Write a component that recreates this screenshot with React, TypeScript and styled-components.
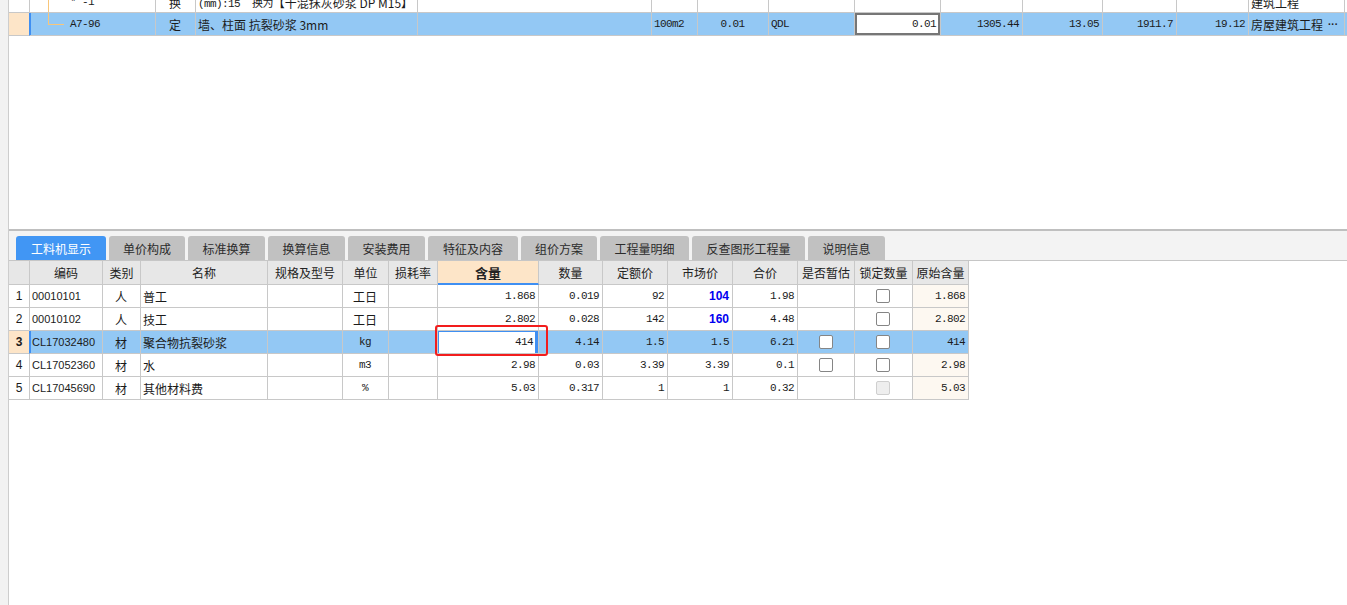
import React from "react";
import styled, { createGlobalStyle, css } from "styled-components";

const GlobalStyle = createGlobalStyle`
  html, body { margin: 0; padding: 0; background: #fff; }
  body {
    font-family: "Noto Sans CJK SC", "Liberation Sans", sans-serif;
    font-size: 12px;
    color: #1b1b1b;
  }
  * { box-sizing: border-box; }
`;

const LINE = "#c8c8c8";
const SEL = "#93c8f4";
const PEACH = "#fde5c8";
const BLUE = "#3f8ff2";

const Page = styled.div`
  display: flex;
  width: 1347px;
  height: 605px;
  overflow: hidden;
  background: #fff;
`;

const LeftStrip = styled.div`
  width: 9px;
  flex: none;
  background: #f2f2f2;
  border-right: 1px solid #cdcdcd;
`;

const Main = styled.div`
  flex: 1;
  min-width: 0;
  display: flex;
  flex-direction: column;
`;

const TopPanel = styled.div`
  height: 229px;
  flex: none;
  overflow: hidden;
  background: #fff;
`;

const TopScroll = styled.div`
  margin-top: -10px;
`;

const Splitter = styled.div`
  height: 2px;
  flex: none;
  background: #bfbfbf;
`;

const TabBar = styled.div`
  height: 30px;
  flex: none;
  display: flex;
  align-items: flex-end;
  gap: 3px;
  padding-left: 7px;
  background: #f3f3f3;
  border-bottom: 1px solid #c6c6c6;
`;

const Tab = styled.div<{ $active?: boolean; $w: number }>`
  width: ${(p) => p.$w}px;
  height: 24px;
  display: flex;
  align-items: center;
  justify-content: center;
  border-radius: 3px 3px 0 0;
  font-size: 12px;
  background: ${(p) => (p.$active ? "#4196f4" : "#c1c1c1")};
  color: ${(p) => (p.$active ? "#fff" : "#2b2b2b")};
`;

const Grid = styled.div<{ $w: string }>`
  width: ${(p) => p.$w};
  display: flex;
  flex-direction: column;
`;

const Row = styled.div<{ $cols: string; $h: number }>`
  display: grid;
  grid-template-columns: ${(p) => p.$cols};
  height: ${(p) => p.$h}px;
`;

type Font = "cjk" | "mono" | "sans";

const fontCss = (f: Font) => {
  if (f === "mono")
    return css`
      font-family: "Liberation Mono", "Noto Sans CJK SC", monospace;
      font-size: 11px;
      letter-spacing: -0.6px;
    `;
  if (f === "sans")
    return css`
      font-family: "Liberation Sans", "Noto Sans CJK SC", sans-serif;
      font-size: 11px;
    `;
  return css`
    font-family: "Noto Sans CJK SC", "Liberation Sans", sans-serif;
    font-size: 12px;
  `;
};

const Cell = styled.div<{
  $align?: "left" | "center" | "right";
  $bg?: string;
  $font?: Font;
  $padL?: number;
  $padR?: number;
  $padT?: number;
  $noRight?: boolean;
  $visible?: boolean;
}>`
  position: relative;
  display: flex;
  align-items: center;
  justify-content: ${(p) =>
    p.$align === "right" ? "flex-end" : p.$align === "center" ? "center" : "flex-start"};
  padding: ${(p) => p.$padT ?? 0}px ${(p) => p.$padR ?? 3}px 0 ${(p) => p.$padL ?? 2}px;
  border-right: ${(p) => (p.$noRight ? "none" : `1px solid ${LINE}`)};
  border-bottom: 1px solid ${LINE};
  background: ${(p) => p.$bg ?? "#fff"};
  white-space: nowrap;
  overflow: ${(p) => (p.$visible ? "visible" : "hidden")};
  ${(p) => fontCss(p.$font ?? "cjk")}
`;

const RowHead = styled(Cell)<{ $sel?: boolean }>`
  justify-content: center;
  padding: 0;
  font-family: "Liberation Sans", sans-serif;
  font-size: 12px;
  font-weight: ${(p) => (p.$sel ? 700 : 400)};
  background: ${(p) => (p.$sel ? PEACH : p.$bg ?? "#fff")};
  border-right-color: ${(p) => (p.$sel ? BLUE : LINE)};
`;

const HeadCell = styled(Cell)<{ $hl?: boolean }>`
  justify-content: center;
  padding: 0;
  background: ${(p) => (p.$hl ? PEACH : "#e7e7e7")};
  font-size: ${(p) => (p.$hl ? 13 : 12)}px;
  font-weight: ${(p) => (p.$hl ? 700 : 400)};
  color: #222;
  ${(p) =>
    p.$hl &&
    css`
      border-bottom: 2px solid ${BLUE};
    `}
`;

const SelEdge = styled.span`
  position: absolute;
  left: 0;
  top: 0;
  bottom: -1px;
  width: 1px;
  background: ${BLUE};
`;

const TreeV = styled.span<{ $full?: boolean }>`
  position: absolute;
  left: 18px;
  top: 0;
  width: 1px;
  height: ${(p) => (p.$full ? "100%" : "11px")};
  background: #f8c67a;
`;

const TreeH = styled.span`
  position: absolute;
  left: 18px;
  top: 11px;
  width: 16px;
  height: 1px;
  background: #f8c67a;
`;

const InputBox = styled(Cell)`
  background: #fff;
  box-shadow: inset 0 0 0 2px #767676;
  padding-right: 4px;
`;

const EditCell = styled(Cell)`
  background: #fff;
  box-shadow: inset 1px 1px 0 ${BLUE}, inset -3px 0 0 ${BLUE};
  padding-right: 5px;
`;

const RedMark = styled.span`
  position: absolute;
  left: -3px;
  top: -6px;
  width: 113px;
  height: 31px;
  border: 2px solid #f21d1d;
  border-radius: 3px;
  z-index: 3;
  pointer-events: none;
`;

const Price = styled.span`
  color: #0000f0;
  font-weight: 700;
  font-family: "Liberation Sans", sans-serif;
  font-size: 12px;
  letter-spacing: 0;
`;

const Check = styled.span<{ $disabled?: boolean }>`
  width: 14px;
  height: 14px;
  border-radius: 2px;
  border: 1px solid ${(p) => (p.$disabled ? "#cfcfcf" : "#858585")};
  background: ${(p) => (p.$disabled ? "#eeeeee" : "#fff")};
`;

const Dots = styled.span`
  margin-left: auto;
  font-family: "Liberation Sans", sans-serif;
  font-weight: 700;
  letter-spacing: 0;
  font-size: 10px;
`;

const CjkInline = styled.span`
  font-family: "Noto Sans CJK SC", sans-serif;
  font-size: 12px;
  letter-spacing: 0;
`;

const WhiteFill = styled.div`
  flex: 1;
  background: #fff;
`;

/* ---------------- data ---------------- */

const TOP_COLS =
  "21px 126px 40px 222px 234px 46px 71px 86px 86px 82px 80px 74px 72px 96px 1fr";

const LOW_COLS =
  "21px 73px 38px 127px 75px 46px 49px 101px 64px 65px 65px 65px 57px 58px 56px";

const tabs: { label: string; w: number }[] = [
  { label: "工料机显示", w: 90 },
  { label: "单价构成", w: 76 },
  { label: "标准换算", w: 77 },
  { label: "换算信息", w: 77 },
  { label: "安装费用", w: 77 },
  { label: "特征及内容", w: 90 },
  { label: "组价方案", w: 76 },
  { label: "工程量明细", w: 89 },
  { label: "反查图形工程量", w: 113 },
  { label: "说明信息", w: 77 },
];

const headers = [
  "",
  "编码",
  "类别",
  "名称",
  "规格及型号",
  "单位",
  "损耗率",
  "含量",
  "数量",
  "定额价",
  "市场价",
  "合价",
  "是否暂估",
  "锁定数量",
  "原始含量",
];

type Item = {
  code: string;
  cat: string;
  name: string;
  unit: string;
  unitMono?: boolean;
  qty: string;
  amount: string;
  quota: string;
  market: string;
  marketBold?: boolean;
  total: string;
  est: boolean;
  lock: "on" | "disabled";
  orig: string;
  sel?: boolean;
};

const items: Item[] = [
  { code: "00010101", cat: "人", name: "普工", unit: "工日", qty: "1.868", amount: "0.019", quota: "92", market: "104", marketBold: true, total: "1.98", est: false, lock: "on", orig: "1.868" },
  { code: "00010102", cat: "人", name: "技工", unit: "工日", qty: "2.802", amount: "0.028", quota: "142", market: "160", marketBold: true, total: "4.48", est: false, lock: "on", orig: "2.802" },
  { code: "CL17032480", cat: "材", name: "聚合物抗裂砂浆", unit: "kg", unitMono: true, qty: "414", amount: "4.14", quota: "1.5", market: "1.5", total: "6.21", est: true, lock: "on", orig: "414", sel: true },
  { code: "CL17052360", cat: "材", name: "水", unit: "m3", unitMono: true, qty: "2.98", amount: "0.03", quota: "3.39", market: "3.39", total: "0.1", est: true, lock: "on", orig: "2.98" },
  { code: "CL17045690", cat: "材", name: "其他材料费", unit: "%", unitMono: true, qty: "5.03", amount: "0.317", quota: "1", market: "1", total: "0.32", est: false, lock: "disabled", orig: "5.03" },
];

/* ---------------- parts ---------------- */

function TopGrid() {
  return (
    <TopScroll>
      <Grid $w="1338px">
        <Row $cols={TOP_COLS} $h={23}>
          <RowHead />
          <Cell $font="mono" $padL={40} $padT={2}>
            <TreeV $full />
            * -1
          </Cell>
          <Cell $align="center" $padT={2}>换</Cell>
          <Cell $font="mono" $padT={2}>
            (mm):15&nbsp;&nbsp;换为<CjkInline>【干混抹灰砂浆 DP M15】</CjkInline>
          </Cell>
          <Cell />
          <Cell />
          <Cell />
          <Cell />
          <Cell />
          <Cell />
          <Cell />
          <Cell />
          <Cell />
          <Cell $padT={2}>建筑工程</Cell>
          <Cell $noRight />
        </Row>
        <Row $cols={TOP_COLS} $h={23}>
          <RowHead $sel />
          <Cell $bg={SEL} $font="mono" $padL={40}>
            <SelEdge />
            <TreeV />
            <TreeH />
            A7-96
          </Cell>
          <Cell $bg={SEL} $align="center">定</Cell>
          <Cell $bg={SEL}>墙、柱面 抗裂砂浆 3mm</Cell>
          <Cell $bg={SEL} />
          <Cell $bg={SEL} $font="mono">100m2</Cell>
          <Cell $bg={SEL} $font="mono" $align="center">0.01</Cell>
          <Cell $bg={SEL} $font="mono">QDL</Cell>
          <InputBox $font="mono" $align="right">0.01</InputBox>
          <Cell $bg={SEL} $font="mono" $align="right">1305.44</Cell>
          <Cell $bg={SEL} $font="mono" $align="right">13.05</Cell>
          <Cell $bg={SEL} $font="mono" $align="right">1911.7</Cell>
          <Cell $bg={SEL} $font="mono" $align="right">19.12</Cell>
          <Cell $bg={SEL} $padR={6}>
            房屋建筑工程
            <Dots>···</Dots>
          </Cell>
          <Cell $bg={SEL} $noRight />
        </Row>
      </Grid>
    </TopScroll>
  );
}

function LowerGrid() {
  return (
    <Grid $w="960px">
      <Row $cols={LOW_COLS} $h={24}>
        {headers.map((h, i) => (
          <HeadCell key={i} $hl={h === "含量"}>
            {h}
          </HeadCell>
        ))}
      </Row>
      {items.map((it, i) => {
        const bg = it.sel ? SEL : "#fff";
        return (
          <Row key={it.code} $cols={LOW_COLS} $h={23}>
            <RowHead $sel={it.sel}>{i + 1}</RowHead>
            <Cell $bg={bg} $font="sans">
              {it.sel && <SelEdge />}
              {it.code}
            </Cell>
            <Cell $bg={bg} $align="center">{it.cat}</Cell>
            <Cell $bg={bg}>{it.name}</Cell>
            <Cell $bg={bg} />
            <Cell $bg={bg} $align="center" $font={it.unitMono ? "mono" : "cjk"}>
              {it.unit}
            </Cell>
            <Cell $bg={bg} />
            {it.sel ? (
              <EditCell $font="mono" $align="right" $visible>
                {it.qty}
                <RedMark />
              </EditCell>
            ) : (
              <Cell $bg={bg} $font="mono" $align="right">{it.qty}</Cell>
            )}
            <Cell $bg={bg} $font="mono" $align="right">{it.amount}</Cell>
            <Cell $bg={bg} $font="mono" $align="right">{it.quota}</Cell>
            <Cell $bg={bg} $font="mono" $align="right">
              {it.marketBold ? <Price>{it.market}</Price> : it.market}
            </Cell>
            <Cell $bg={bg} $font="mono" $align="right">{it.total}</Cell>
            <Cell $bg={bg} $align="center">{it.est && <Check />}</Cell>
            <Cell $bg={bg} $align="center">
              <Check $disabled={it.lock === "disabled"} />
            </Cell>
            <Cell $bg={it.sel ? SEL : "#fdf8f1"} $font="mono" $align="right">
              {it.orig}
            </Cell>
          </Row>
        );
      })}
    </Grid>
  );
}

export default function App() {
  return (
    <>
      <GlobalStyle />
      <Page>
        <LeftStrip />
        <Main>
          <TopPanel>
            <TopGrid />
          </TopPanel>
          <Splitter />
          <TabBar>
            {tabs.map((t, i) => (
              <Tab key={t.label} $w={t.w} $active={i === 0}>
                {t.label}
              </Tab>
            ))}
          </TabBar>
          <LowerGrid />
          <WhiteFill />
        </Main>
      </Page>
    </>
  );
}
